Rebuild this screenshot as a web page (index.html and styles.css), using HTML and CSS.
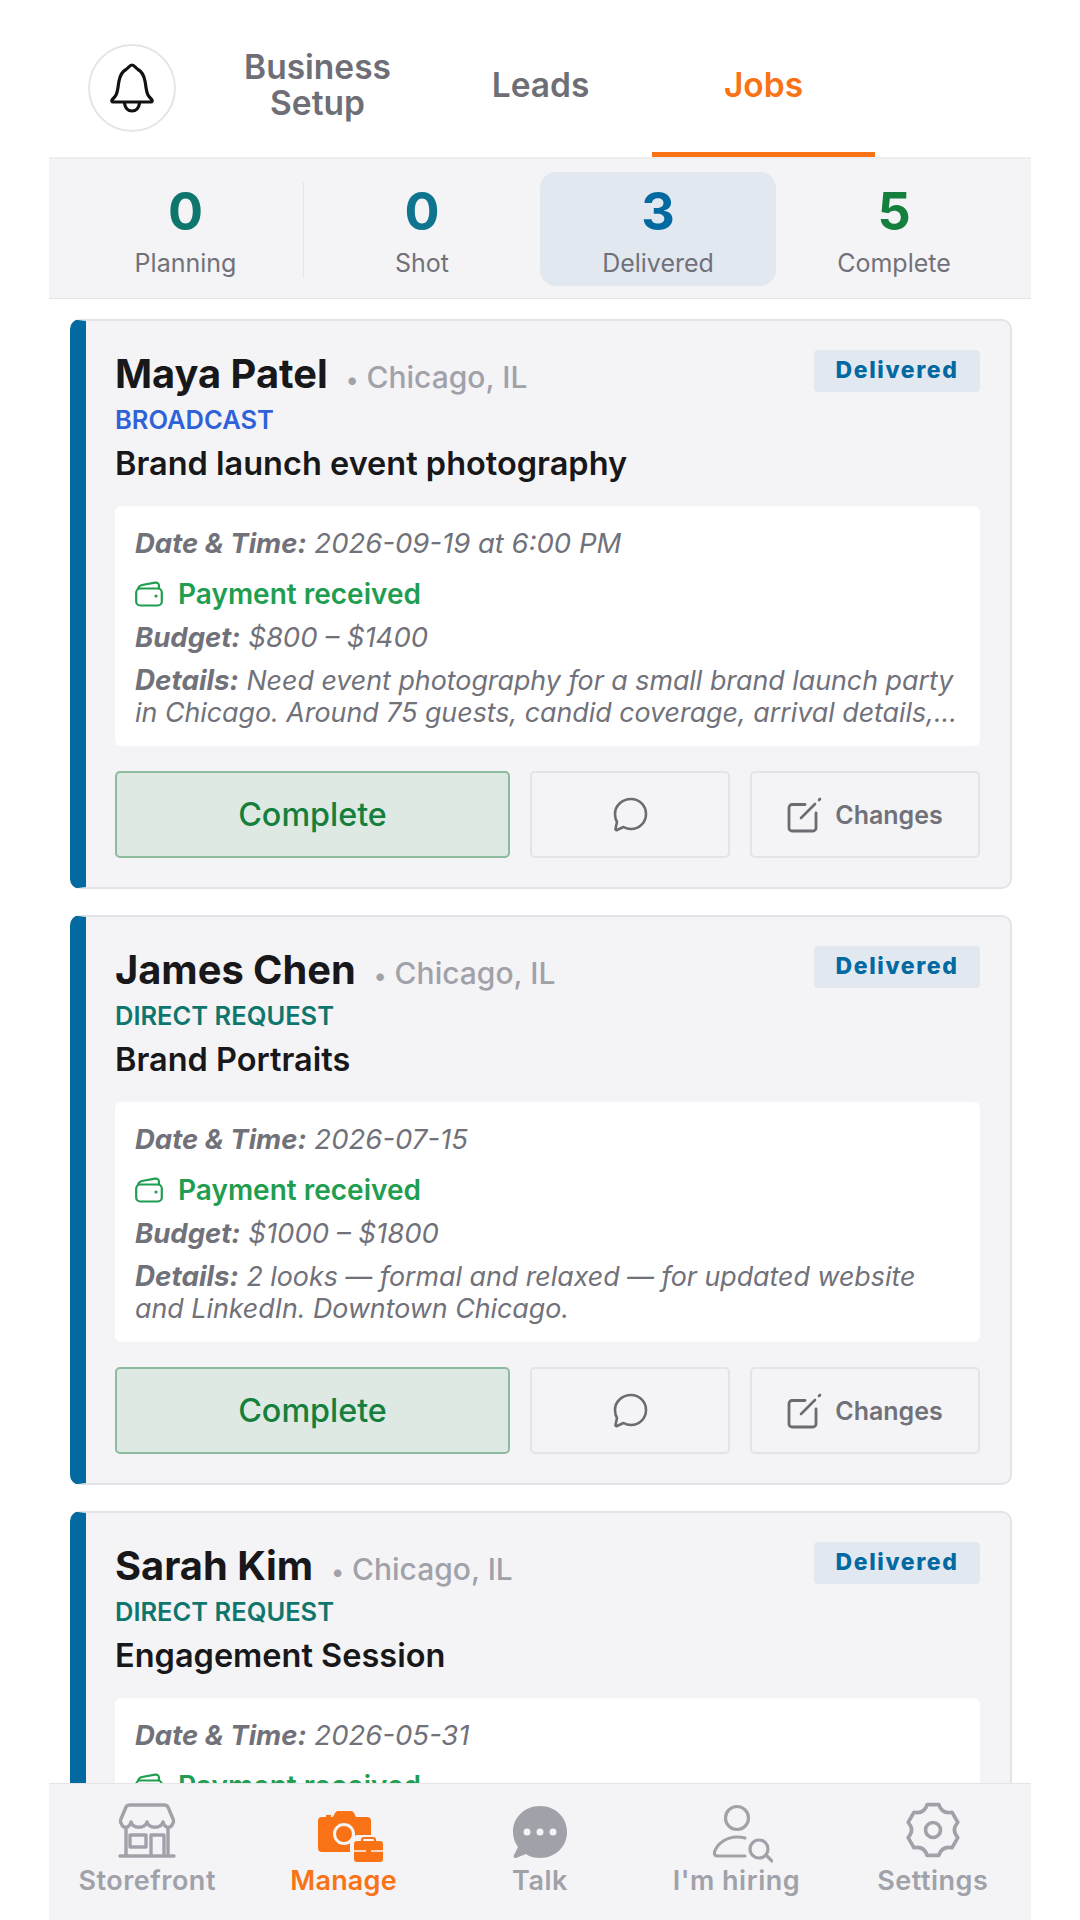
FILE: index.html
```html
<!DOCTYPE html>
<html lang="en">
<head>
  <meta charset="UTF-8">
  <title>Jobs</title>
  <link rel="stylesheet" href="styles.css">
</head>
<body>
  <svg class="sprite" width="0" height="0">
    <symbol id="i-wallet" viewBox="0 0 28 26">
      <rect x="1.200" y="7.500" width="25.600" height="17" rx="4" fill="none" stroke="currentColor" stroke-width="2.200"/>
      <path d="M3 8 C3.500 5.500 5 4.500 7 4 L20 1.600 C22.500 1.200 24 2.500 24 5 V8" fill="none" stroke="currentColor" stroke-width="2.200" stroke-linejoin="round"/>
      <circle cx="21" cy="15" r="1.600" fill="currentColor"/>
    </symbol>
    <symbol id="i-chat" viewBox="0 0 36 36">
      <path d="M19 2 C27.500 2 34 8.500 34 17 C34 25.500 27.500 32 19 32 C16 32 13.500 31.200 11.500 30 L5 33 C4 33.400 3.300 32.700 3.500 31.700 L5 25 C3.600 22.700 3 20 3 17 C3 8.500 10.500 2 19 2 Z" fill="none" stroke="currentColor" stroke-width="2.600" stroke-linejoin="round"/>
    </symbol>
    <symbol id="i-edit" viewBox="0 0 36 36">
      <path d="M18 7.500 H5 a3 3 0 0 0 -3 3 V31 a3 3 0 0 0 3 3 H26 a3 3 0 0 0 3 -3 V16" fill="none" stroke="currentColor" stroke-width="2.800" stroke-linecap="round"/>
      <path d="M14 21 L28 7 M32 3 L33 2" fill="none" stroke="currentColor" stroke-width="2.600" stroke-linecap="round"/>
    </symbol>
  </svg>

  <div class="app">
    <header class="topbar">
      <div class="bell">
        <svg width="48" height="50" viewBox="0 0 48 50" fill="none" stroke="#111114" stroke-width="3.200" stroke-linejoin="round" stroke-linecap="round">
          <path d="M24 2 C26.500 2 27.500 5 30 6.500 C34.500 9 36 13 37 18 C38 23 38 28 40 32 C41 34 43 35.500 44 37 C44.500 38 44 39 43 39 H5 C4 39 3.500 38 4 37 C5 35.500 7 34 8 32 C10 28 10 23 11 18 C12 13 13.500 9 18 6.500 C20.500 5 21.500 2 24 2 Z"/>
          <path d="M16.500 40 C17 45 20 48 24 48 C28 48 31 45 31.500 40"/>
        </svg>
      </div>
      <nav class="tabs">
        <a class="tab">Business<br>Setup</a>
        <a class="tab">Leads</a>
        <a class="tab tab-active">Jobs</a>
      </nav>
    </header>

    <section class="summary">
      <div class="stat stat-line"><b class="num teal">0</b><span>Planning</span></div>
      <div class="stat"><b class="num cyan">0</b><span>Shot</span></div>
      <div class="stat stat-active"><b class="num blue">3</b><span>Delivered</span></div>
      <div class="stat"><b class="num green">5</b><span>Complete</span></div>
    </section>

    <main class="list">
      <article class="card">
        <div class="card-head">
          <h3 class="name">Maya Patel</h3>
          <span class="city"><span class="dot">•</span>Chicago, IL</span>
          <span class="badge">Delivered</span>
        </div>
        <div class="kind kind-blue">BROADCAST</div>
        <div class="title">Brand launch event photography</div>
        <div class="info">
          <p class="date"><b>Date &amp; Time:</b> 2026-09-19 at 6:00 PM</p>
          <p class="paid"><svg class="wallet"><use href="#i-wallet"/></svg>Payment received</p>
          <p class="budget"><b>Budget:</b> $800 – $1400</p>
          <p class="details"><b>Details:</b> Need event photography for a small brand launch party in Chicago. Around 75 guests, candid coverage, arrival details,...</p>
        </div>
        <div class="actions">
          <button class="btn-complete">Complete</button>
          <button class="btn-chat"><svg class="chat"><use href="#i-chat"/></svg></button>
          <button class="btn-changes"><svg class="edit"><use href="#i-edit"/></svg>Changes</button>
        </div>
      </article>

      <article class="card">
        <div class="card-head">
          <h3 class="name">James Chen</h3>
          <span class="city"><span class="dot">•</span>Chicago, IL</span>
          <span class="badge">Delivered</span>
        </div>
        <div class="kind kind-teal">DIRECT REQUEST</div>
        <div class="title">Brand Portraits</div>
        <div class="info">
          <p class="date"><b>Date &amp; Time:</b> 2026-07-15</p>
          <p class="paid"><svg class="wallet"><use href="#i-wallet"/></svg>Payment received</p>
          <p class="budget"><b>Budget:</b> $1000 – $1800</p>
          <p class="details"><b>Details:</b> 2 looks — formal and relaxed — for updated website and LinkedIn. Downtown Chicago.</p>
        </div>
        <div class="actions">
          <button class="btn-complete">Complete</button>
          <button class="btn-chat"><svg class="chat"><use href="#i-chat"/></svg></button>
          <button class="btn-changes"><svg class="edit"><use href="#i-edit"/></svg>Changes</button>
        </div>
      </article>

      <article class="card">
        <div class="card-head">
          <h3 class="name">Sarah Kim</h3>
          <span class="city"><span class="dot">•</span>Chicago, IL</span>
          <span class="badge">Delivered</span>
        </div>
        <div class="kind kind-teal">DIRECT REQUEST</div>
        <div class="title">Engagement Session</div>
        <div class="info">
          <p class="date"><b>Date &amp; Time:</b> 2026-05-31</p>
          <p class="paid"><svg class="wallet"><use href="#i-wallet"/></svg>Payment received</p>
        </div>
      </article>
    </main>

    <footer class="bottom">
      <a class="nav-item">
        <svg width="60" height="62" viewBox="0 0 60 62" fill="none" stroke="#a1a1aa" stroke-width="3.400" stroke-linejoin="round" stroke-linecap="round">
          <path d="M13 3 H47 Q50 3 51 5 L56 17 Q57 20 56 21 C54 27 48 27 46 20 C44 27 32 27 30 20 C28 27 16 27 14 20 C12 27 6 27 4 21 Q3 20 4 17 L9 5 Q10 3 13 3 Z"/>
          <path d="M9 26 V53 M51 26 V53 M3 54 H57"/>
          <path d="M13 33 H29 V45 H13 Z M34 53 V33 H47 V53"/>
        </svg>
        <span>Storefront</span>
      </a>
      <a class="nav-item nav-active">
        <svg width="80" height="62" viewBox="-14 -8 80 62">
          <path d="M4 7 H8 V5 H13 V7 H15 L17 3 Q18 1 20 1 H33 Q35 1 36 3 L38 7 H49 Q53 7 53 11 V42 H4 Q0 42 0 38 V11 Q0 7 4 7 Z" fill="#f97316"/>
          <circle cx="26" cy="24" r="9.500" fill="none" stroke="#f4f4f6" stroke-width="3"/>
          <rect x="32" y="25" width="40" height="32" rx="8" fill="#f4f4f6"/>
          <path d="M44 32 V30 Q44 28 46 28 H55 Q57 28 57 30 V32" fill="none" stroke="#f97316" stroke-width="2.200"/>
          <rect x="36" y="31" width="29" height="21" rx="3" fill="#f97316"/>
          <path d="M36 41 H65" stroke="#f4f4f6" stroke-width="1.500"/>
          <rect x="48" y="39" width="5" height="4" fill="#f97316"/>
        </svg>
        <span>Manage</span>
      </a>
      <a class="nav-item">
        <svg width="56" height="62" viewBox="0 -3 56 62">
          <path d="M28 1 C43 1 55 12 55 27 C55 42 43 53 28 53 C23 53 18 52 14 49 L4 53 C2 53.500 1 52 2 50 L6 42 C3 38 1 33 1 27 C1 12 13 1 28 1 Z" fill="#a1a1aa"/>
          <circle cx="15" cy="27" r="3.500" fill="#f4f4f6"/>
          <circle cx="28" cy="27" r="3.500" fill="#f4f4f6"/>
          <circle cx="41" cy="27" r="3.500" fill="#f4f4f6"/>
        </svg>
        <span>Talk</span>
      </a>
      <a class="nav-item">
        <svg width="74" height="62" viewBox="-13 -3 74 62" fill="none" stroke="#a1a1aa" stroke-width="3.200" stroke-linecap="round" stroke-linejoin="round">
          <circle cx="25" cy="13" r="11.500"/>
          <path d="M33 33 C30 32 28 32 25 32 C14 32 5 39 2.500 47 C2 50 3 51 6 51 H33"/>
          <circle cx="47" cy="44" r="9"/>
          <path d="M54 50 L60 56"/>
        </svg>
        <span>I'm hiring</span>
      </a>
      <a class="nav-item">
        <svg width="56" height="62" viewBox="0 0 56 62" fill="none" stroke="#a1a1aa" stroke-width="3.600" stroke-linejoin="round">
          <path d="M22.150 2.670 H33.850 Q37 12.400 47 10.270 L52.860 20.400 Q46 28 52.860 35.600 L47 45.730 Q37 43.600 33.850 53.330 H22.150 Q19 43.600 9 45.730 L3.140 35.600 Q10 28 3.140 20.400 L9 10.270 Q19 12.400 22.150 2.670 Z"/>
          <circle cx="28" cy="28" r="7.500"/>
        </svg>
        <span>Settings</span>
      </a>
    </footer>
  </div>
</body>
</html>
```

FILE: styles.css
```css
* {
  box-sizing: border-box;
}
body {
  margin: 0;
  background: #fff;
  font-family: Inter, "Liberation Sans", sans-serif;
}
p {
  margin: 0;
}
.sprite {
  position: absolute;
}
.app {
  width: 982px;
  height: 1920px;
  margin: 0 auto;
  display: flex;
  flex-direction: column;
  overflow: hidden;
}

/* top tabs */
.topbar {
  height: 157px;
  flex: none;
  display: flex;
  align-items: stretch;
}
.bell {
  width: 88px;
  height: 88px;
  margin: 44px 0 0 39px;
  border: 2px solid #e5e5e8;
  border-radius: 50%;
  display: flex;
  align-items: center;
  justify-content: center;
}
.tabs {
  display: flex;
  margin-left: 30px;
}
.tab {
  width: 223px;
  display: flex;
  align-items: center;
  justify-content: center;
  text-align: center;
  font-size: 33.500px;
  line-height: 36px;
  font-weight: 600;
  color: #6e6e76;
  padding-top: 18px;
  border-bottom: 5px solid transparent;
}
.tab-active {
  color: #f97316;
  border-bottom-color: #f97316;
}

/* status counts */
.summary {
  flex: none;
  height: 142px;
  background: #f4f4f6;
  border-top: 2px solid #eceef0;
  border-bottom: 1px solid #e5e5e8;
  padding: 13px 19px 15px;
  display: grid;
  grid-template-columns: repeat(4, 236px);
}
.stat {
  border-radius: 16px;
  display: flex;
  flex-direction: column;
  align-items: center;
  color: #71717a;
  font-size: 25px;
  line-height: 30px;
  padding-top: 10px;
}
.stat-line {
  border-right: 1px solid #e5e5e8;
  margin: 10px 0 8px;
  padding-top: 0;
  border-radius: 0;
}
.stat-active {
  background: #e2e8f0;
}
.num {
  font-size: 52px;
  line-height: 60px;
  font-weight: 700;
  margin-bottom: 6px;
}
.teal { color: #0f766e; }
.cyan { color: #0e7490; }
.blue { color: #0369a1; }
.green { color: #15803d; }

/* job cards */
.list {
  flex: 1;
  min-height: 0;
  overflow: hidden;
  padding: 20px 19px 0 21px;
}
.card {
  height: 570px;
  margin-bottom: 26px;
  background: #f4f4f6;
  border: 2px solid #e2e4e8;
  border-left: 16px solid #0369a1;
  border-radius: 10px;
  padding: 28px 30px 0 29px;
}
.card-head {
  display: flex;
  align-items: baseline;
  height: 50px;
}
.name {
  margin: 0;
  font-size: 39.800px;
  line-height: 50px;
  font-weight: 700;
  color: #18181b;
}
.city {
  margin-left: 18px;
  font-size: 30px;
  color: #a1a1aa;
  font-weight: 500;
}
.dot {
  font-size: 24px;
  margin-right: 8px;
}
.badge {
  margin-left: auto;
  margin-top: 1px;
  align-self: flex-start;
  width: 166px;
  height: 42px;
  background: #e2e8f0;
  border-radius: 4px;
  color: #0369a1;
  font-size: 23px;
  line-height: 40px;
  font-weight: 800;
  letter-spacing: 1.600px;
  text-align: center;
}
.kind {
  margin-top: 6px;
  font-size: 25.500px;
  line-height: 30px;
  font-weight: 600;
}
.kind-blue { color: #2f62d9; }
.kind-teal { color: #0f766e; }
.title {
  margin-top: 7px;
  font-size: 32.500px;
  line-height: 44px;
  font-weight: 600;
  color: #18181b;
}
.info {
  margin-top: 20px;
  height: 240px;
  background: #fff;
  border-radius: 6px;
  padding: 21px 20px 0;
  color: #71717a;
  font-size: 27.500px;
  font-style: italic;
  line-height: 32px;
}
.info b {
  font-weight: 700;
}
.paid {
  margin: 19px 0 11px;
  display: flex;
  align-items: center;
  gap: 15px;
  color: #1f9d50;
  font-size: 28px;
  font-style: normal;
  font-weight: 600;
}
.wallet {
  width: 28px;
  height: 26px;
}
.budget {
  margin-bottom: 11px;
}
.details {
  font-size: 26.800px;
}
.details b {
  font-size: 27.800px;
}
.actions {
  margin-top: 25px;
  display: flex;
  gap: 20px;
}
.actions button {
  height: 87px;
  border-radius: 5px;
  font-family: inherit;
  display: flex;
  align-items: center;
  justify-content: center;
  padding: 0;
}
.btn-complete {
  width: 395px;
  background: #dde9e2;
  border: 2px solid #8dbb9e;
  color: #15803d;
  font-size: 32.300px;
  font-weight: 500;
}
.btn-chat {
  width: 200px;
  background: #f4f4f6;
  border: 2px solid #e2e4e8;
  color: #6b6b73;
}
.chat {
  width: 36px;
  height: 36px;
}
.btn-changes {
  width: 230px;
  background: #f4f4f6;
  border: 2px solid #e2e4e8;
  color: #71717a;
  font-size: 25px;
  font-weight: 600;
  gap: 12px;
}
.btn-changes svg {
  color: #6b6b73;
}
.edit {
  width: 36px;
  height: 36px;
}

/* bottom nav */
.bottom {
  flex: none;
  height: 137px;
  background: #f4f4f6;
  border-top: 1px solid #e5e5e8;
  display: grid;
  grid-template-columns: repeat(5, 1fr);
}
.nav-item {
  display: flex;
  flex-direction: column;
  align-items: center;
  padding-top: 18px;
  color: #a1a1aa;
  font-size: 27px;
  font-weight: 600;
  letter-spacing: 0.500px;
}
.nav-item svg {
  flex: none;
}
.nav-item span {
  line-height: 34px;
}
.nav-active {
  color: #f97316;
  letter-spacing: 0.200px;
}
```
